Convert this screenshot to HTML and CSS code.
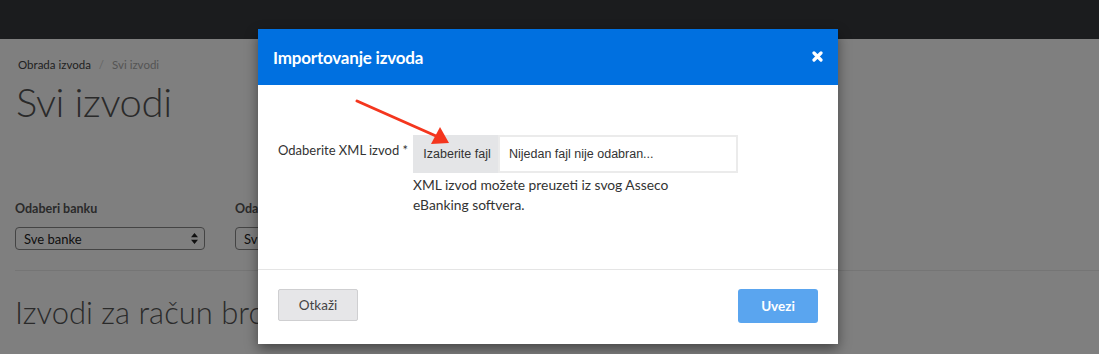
FILE: index.html
```html
<!DOCTYPE html>
<html lang="sr">
<head>
<meta charset="utf-8">
<title>Svi izvodi</title>
<link rel="stylesheet" href="styles.css">
</head>
<body>
<header class="navbar"></header>
<main class="page">
  <nav class="breadcrumb"><span class="crumb">Obrada izvoda</span><span class="sep">/</span><span class="crumb current">Svi izvodi</span></nav>
  <h1 class="title">Svi izvodi</h1>
  <div class="filters">
    <div class="filter">
      <label class="filter-label">Odaberi banku</label>
      <div class="select"><span>Sve banke</span><svg class="arrows" width="7" height="11" viewBox="0 0 7 11"><path d="M3.5 0 L7 4.3 L0 4.3 Z M0 6.7 L7 6.7 L3.5 11 Z" fill="#222"/></svg></div>
    </div>
    <div class="filter">
      <label class="filter-label">Odaberi račun</label>
      <div class="select"><span>Svi računi</span><svg class="arrows" width="7" height="11" viewBox="0 0 7 11"><path d="M3.5 0 L7 4.3 L0 4.3 Z M0 6.7 L7 6.7 L3.5 11 Z" fill="#222"/></svg></div>
    </div>
  </div>
  <hr class="rule">
  <h2 class="subtitle">Izvodi za račun broj</h2>
</main>
<div class="backdrop"></div>
<section class="modal">
  <div class="modal-header">
    <h3 class="modal-title">Importovanje izvoda</h3>
    <svg class="close" width="11" height="11" viewBox="0 0 11 11"><path d="M2 2 L9 9 M9 2 L2 9" stroke="#fff" stroke-width="3.2" stroke-linecap="round"/></svg>
  </div>
  <div class="modal-body">
    <div class="form-row">
      <label class="form-label">Odaberite XML izvod *</label>
      <div class="form-field">
        <div class="file-input"><span class="file-btn">Izaberite fajl</span><span class="file-name">Nijedan fajl nije odabran...</span></div>
        <p class="help">XML izvod možete preuzeti iz svog Asseco eBanking softvera.</p>
      </div>
    </div>
  </div>
  <div class="modal-footer">
    <button class="btn btn-cancel">Otkaži</button>
    <button class="btn btn-primary">Uvezi</button>
  </div>
</section>
<svg class="annotation" width="1099" height="354" viewBox="0 0 1099 354">
  <line x1="357" y1="101" x2="436" y2="136" stroke="#f4361e" stroke-width="3" stroke-linecap="round"/>
  <polygon points="449,143 431,144 440,127" fill="#f4361e"/>
</svg>
</body>
</html>
```
FILE: styles.css
```css
* { box-sizing: border-box; }
html, body { margin: 0; padding: 0; }
body {
  width: 1099px;
  height: 354px;
  overflow: hidden;
  background: #fff;
  font-family: Lato, "Open Sans", sans-serif;
  color: #333;
  position: relative;
}
.navbar {
  height: 39px;
  background: #36383c;
}
.page {
  padding: 0 0 0 15px;
}
.breadcrumb {
  margin-top: 18px;
  font-size: 11.5px;
  line-height: 16px;
  padding-left: 3px;
  display: flex;
  gap: 8px;
}
.crumb { color: #444; }
.crumb.current { color: #aaa; }
.sep { color: #ccc; }
.title {
  margin: 5px 0 0 1px;
  font-size: 40px;
  font-weight: 300;
  line-height: 48px;
  color: #555;
  letter-spacing: -0.4px;
}
.filters {
  display: flex;
  gap: 30px;
  margin-top: 75px;
}
.filter {
  width: 190px;
  display: flex;
  flex-direction: column;
  gap: 10px;
}
.filter-label {
  font-size: 12.5px;
  font-weight: 700;
  line-height: 16px;
  color: #555;
}
.select {
  height: 23px;
  border: 1px solid #888;
  border-radius: 4px;
  display: flex;
  align-items: center;
  justify-content: space-between;
  padding: 0 6px 0 8px;
  font-size: 13px;
  color: #222;
}
.arrows { flex: none; }
.rule {
  border: 0;
  border-top: 1px solid #eaeaea;
  margin: 20px 0 0 0;
}
.subtitle {
  margin: 20px 0 0 0;
  font-size: 31px;
  font-weight: 300;
  line-height: 42px;
  color: #555;
  white-space: nowrap;
}
.backdrop {
  position: absolute;
  inset: 0;
  background: rgba(0, 0, 0, 0.5);
}
.modal {
  position: absolute;
  left: 258px;
  top: 29px;
  width: 580px;
  height: 315px;
  background: #fff;
  display: flex;
  flex-direction: column;
  box-shadow: 0 5px 12px rgba(0, 0, 0, 0.45);
}
.modal-header {
  height: 56px;
  background: #0070e0;
  display: flex;
  align-items: center;
  justify-content: space-between;
  padding: 0 15px 0 15px;
}
.modal-title {
  margin: 0;
  color: #fff;
  font-size: 17px;
  font-weight: 700;
  letter-spacing: -0.2px;
}
.close { margin-top: -1px; }
.modal-body {
  height: 185px;
  border-bottom: 1px solid #e5e5e5;
  padding: 50px 20px 0 20px;
}
.form-row {
  display: flex;
}
.form-label {
  width: 135px;
  font-size: 13px;
  line-height: 20px;
  padding-top: 5px;
  color: #333;
  white-space: nowrap;
}
.form-field {
  width: 325px;
}
.file-input {
  display: flex;
  height: 38px;
}
.file-btn {
  width: 85px;
  background: #e4e5e7;
  font-family: "Liberation Sans", Arial, sans-serif;
  font-size: 12.5px;
  color: #333;
  display: flex;
  align-items: center;
  justify-content: center;
  padding-left: 3px;
}
.file-name {
  flex: 1;
  border: 2px solid #ebebeb;
  font-family: "Liberation Sans", Arial, sans-serif;
  font-size: 12.5px;
  color: #333;
  display: flex;
  align-items: center;
  padding-left: 9px;
}
.help {
  margin: 2px 0 0 0;
  width: 280px;
  font-size: 13.8px;
  line-height: 20px;
  color: #333;
}
.modal-footer {
  flex: 1;
  display: flex;
  justify-content: space-between;
  align-items: flex-start;
  padding: 19px 20px 0 20px;
}
.btn {
  width: 80px;
  font-family: Lato, "Open Sans", sans-serif;
  font-size: 13.5px;
  font-weight: 400;
  cursor: pointer;
}
.btn-cancel {
  height: 32px;
  background: #e6e6e8;
  border: 1px solid #cfcfd1;
  border-radius: 2px;
  color: #444;
}
.btn-primary {
  height: 34px;
  background: #5aa5ef;
  border: 0;
  border-radius: 3px;
  color: #fff;
  font-weight: 700;
}
.annotation {
  position: absolute;
  left: 0;
  top: 0;
  pointer-events: none;
}
```
